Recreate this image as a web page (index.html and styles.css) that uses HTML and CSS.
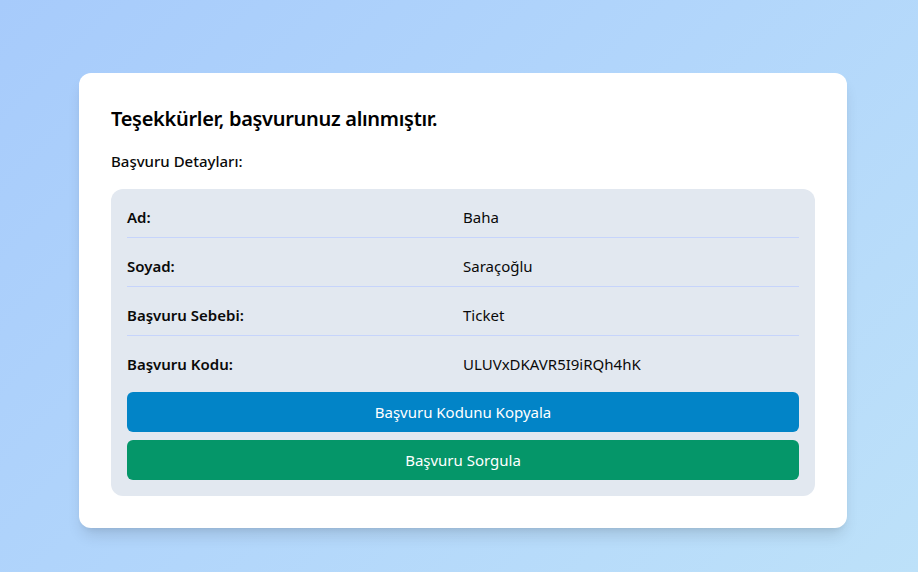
FILE: index.html
```html
<!DOCTYPE html>
<html lang="tr">
<head>
<meta charset="utf-8">
<title>Başvuru</title>
<link rel="stylesheet" href="styles.css">
</head>
<body>
<main class="page">
  <section class="card">
    <h1 class="title">Teşekkürler, başvurunuz alınmıştır.</h1>
    <p class="subtitle">Başvuru Detayları:</p>
    <div class="details">
      <div class="row"><span class="label">Ad:</span><span class="value">Baha</span></div>
      <div class="row"><span class="label">Soyad:</span><span class="value">Saraçoğlu</span></div>
      <div class="row"><span class="label">Başvuru Sebebi:</span><span class="value">Ticket</span></div>
      <div class="row last"><span class="label">Başvuru Kodu:</span><span class="value">ULUVxDKAVR5I9iRQh4hK</span></div>
      <div class="actions">
        <button class="btn btn-blue" type="button">Başvuru Kodunu Kopyala</button>
        <button class="btn btn-green" type="button">Başvuru Sorgula</button>
      </div>
    </div>
  </section>
</main>
</body>
</html>
```

FILE: styles.css
```css
* { box-sizing: border-box; }
html, body { margin: 0; padding: 0; }
body {
  font-family: "Noto Sans", "Open Sans", sans-serif;
  color: #0a0a0a;
  background: linear-gradient(135deg, #a7cbfb 0%, #b2d6fb 50%, #bde1f9 100%);
  min-height: 572px;
}
.page {
  display: flex;
  justify-content: center;
  padding-top: 73px;
  padding-left: 8px;
}
.card {
  width: 768px;
  background: #fff;
  border-radius: 12px;
  padding: 32px;
  box-shadow: 0 10px 15px -3px rgba(0, 0, 0, 0.12), 0 4px 6px -4px rgba(0, 0, 0, 0.1);
}
.title {
  margin: 0 0 16px;
  font-size: 20px;
  line-height: 28px;
  font-weight: 600;
  letter-spacing: -0.3px;
  color: #000;
}
.subtitle {
  margin: 0 0 16px;
  font-size: 15px;
  line-height: 24px;
  font-weight: 500;
}
.details {
  background: #e2e8f0;
  border-radius: 12px;
  padding: 16px;
  display: flex;
  flex-direction: column;
  gap: 16px;
}
.row {
  display: grid;
  grid-template-columns: 1fr 1fr;
  font-size: 15px;
  line-height: 24px;
  padding-bottom: 8px;
  border-bottom: 1px solid #c6d4fb;
}
.row.last { padding-bottom: 0; border-bottom: 0; }
.label { font-weight: 600; }
.value { font-weight: 400; }
.actions {
  display: flex;
  flex-direction: column;
  gap: 8px;
}
.btn {
  height: 40px;
  border: 0;
  border-radius: 6px;
  color: #fff;
  font-family: inherit;
  font-size: 15px;
}
.btn-blue { background: #0284c7; }
.btn-green { background: #059669; }
```
